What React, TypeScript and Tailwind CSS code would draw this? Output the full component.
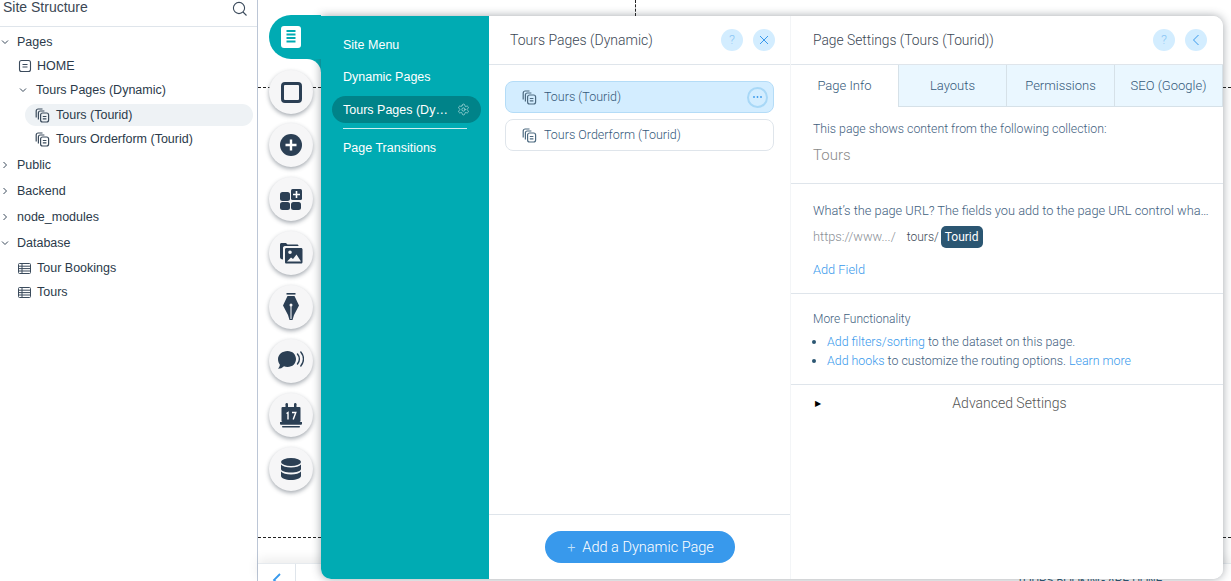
import type { ReactNode } from "react";
import { Settings } from "lucide-react";

const pageIconColor = "#2b3f54";

const PageIcon = () => (
  <svg width="14" height="14" viewBox="0 0 14 14" fill="none" stroke="#3b4b5c" strokeWidth="1.1">
    <rect x="1.500" y="1.500" width="11" height="11" rx="2" />
    <path d="M4.500 5.500h5M4.500 8h5" />
  </svg>
);

const StackIcon = ({ color = "#3b4b5c" }: { color?: string }) => (
  <svg width="15" height="15" viewBox="0 0 15 15" fill="none" stroke={color} strokeWidth="1.200">
    <path d="M1.200 9.500V3C1.200 1.800 2 1 3.200 1h4.300" />
    <path d="M3.400 11.500V5c0-1.200.8-2 2-2h4" />
    <rect x="5.600" y="5" width="8" height="9" rx="2" />
    <path d="M7.800 8.500h3.600M7.800 10.800h3.600" />
  </svg>
);

const TableIcon = () => (
  <svg width="13" height="13" viewBox="0 0 13 13" fill="none" stroke="#3b4b5c" strokeWidth="1">
    <rect x="0.500" y="1.500" width="12" height="10" rx="1" />
    <path d="M0.500 4.200h12M0.500 6.600h12M0.500 9h12M4 1.500v10" />
  </svg>
);

const Chevron = ({ open }: { open: boolean }) => (
  <svg width="8" height="8" viewBox="0 0 8 8" fill="none" stroke="#3b4b5c" strokeWidth="1" className="shrink-0">
    {open ? <path d="M1 2.500 4 5.500 7 2.500" /> : <path d="M2.500 1 5.500 4 2.500 7" />}
  </svg>
);

const FolderRow = ({ label, open, className = "" }: { label: string; open: boolean; className?: string }) => (
  <div className={`flex h-6 items-center pl-[1px] ${className}`}>
    <Chevron open={open} />
    <span className="ml-[8px]">{label}</span>
  </div>
);

const Sidebar = () => (
  <div className="w-[258px] h-full shrink-0 border-r border-[#bcc6d6] bg-white text-[12.5px] text-[#2b3a4a] font-['Liberation_Sans',sans-serif]">
    <div className="flex h-[27px] items-start justify-between border-b border-[#dfe5eb] pl-[3px] pr-[9px]">
      <span className="text-[14px] leading-[15px] text-[#3b4754]">Site Structure</span>
      <svg width="16" height="16" viewBox="0 0 16 16" fill="none" stroke="#3b4b5c" strokeWidth="1.100" className="mt-[1px]">
        <circle cx="7" cy="7" r="5.600" />
        <path d="M11 11l3.500 3.500" />
      </svg>
    </div>
    <FolderRow label="Pages" open className="mt-[3px]" />
    <div className="flex h-6 items-center pl-[18px] gap-[4px]">
      <PageIcon />
      <span className="ml-[1px]">HOME</span>
    </div>
    <div className="flex h-6 items-center pl-[19px]">
      <Chevron open />
      <span className="ml-[9px]">Tours Pages (Dynamic)</span>
    </div>
    <div className="ml-[25px] mr-[4px] mt-[2px] flex h-[22px] items-center gap-[6px] rounded-full bg-[#eef2f5] pl-[10px]">
      <StackIcon />
      <span>Tours (Tourid)</span>
    </div>
    <div className="ml-[25px] mr-[4px] mt-[1px] flex h-6 items-center gap-[6px] pl-[10px]">
      <StackIcon />
      <span>Tours Orderform (Tourid)</span>
    </div>
    <FolderRow label="Public" open={false} className="mt-[2px]" />
    <FolderRow label="Backend" open={false} className="mt-[2px]" />
    <FolderRow label="node_modules" open={false} className="mt-[2px]" />
    <FolderRow label="Database" open className="mt-[2px]" />
    <div className="mt-[1px] flex h-6 items-center gap-[6px] pl-[18px]">
      <TableIcon />
      <span>Tour Bookings</span>
    </div>
    <div className="flex h-6 items-center gap-[6px] pl-[18px]">
      <TableIcon />
      <span>Tours</span>
    </div>
  </div>
);

const RailButton = ({ children, className = "" }: { children: ReactNode; className?: string }) => (
  <div className={`flex h-11 w-11 items-center justify-center rounded-full bg-[#f6f6f7] shadow-[0_2px_4px_rgba(60,70,85,0.45)] ${className}`}>
    {children}
  </div>
);

const Rail = () => (
  <div className="relative -mt-px w-[52px] shrink-0">
    <div className="absolute right-0 top-[43px] h-[14px] w-[14px] bg-[#00abb3]" />
    <div className="absolute right-0 top-[44px] h-[14px] w-[14px] rounded-tr-[14px] bg-white" />
    <div className="relative z-20 flex h-11 items-center justify-center rounded-l-[22px] bg-[#00abb3] pr-[9px]">
      <svg width="20" height="22" viewBox="0 0 20 22">
        <rect x="0" y="0" width="20" height="22" rx="3" fill="#fff" />
        <path d="M5.500 5h9M5.500 8.500h9M5.500 12h9M5.500 15.500h9" stroke="#00abb3" strokeWidth="2" />
      </svg>
    </div>
    <div className="relative flex flex-col gap-[10px] pt-[11px]">
      <RailButton className="-mb-px">
        <div className="h-[21px] w-[21px] rounded-[4px] border-[3px] border-[#2b3f54]" />
      </RailButton>
      <RailButton>
        <svg width="22" height="22" viewBox="0 0 22 22">
          <circle cx="11" cy="11" r="11" fill={pageIconColor} />
          <path d="M11 5.500v11M5.500 11h11" stroke="#fff" strokeWidth="2.400" />
        </svg>
      </RailButton>
      <RailButton>
        <svg width="22" height="22" viewBox="0 0 22 22" fill={pageIconColor}>
          <rect x="0" y="4" width="10" height="9" rx="2.500" />
          <rect x="0" y="14" width="10" height="8" rx="2.500" />
          <rect x="11" y="14" width="10" height="8" rx="2.500" />
          <rect x="11" y="1" width="11" height="11" rx="1.500" />
          <path d="M16.500 3v7M13 6.500h7" stroke="#fff" strokeWidth="1.600" />
        </svg>
      </RailButton>
      <RailButton>
        <svg width="23" height="22" viewBox="0 0 23 22" fill={pageIconColor}>
          <path d="M0 2.500C0 1.500.7 1 1.500 1H6l1.500 1.500H17c1 0 1.500.5 1.500 1.500H5C3.500 4 3 5 3 6v11.500C1 17.500 0 16.500 0 15z" />
          <path fillRule="evenodd" d="M6.500 6H21c1 0 1.500.6 1.500 1.500V20c0 1-.6 1.500-1.500 1.500H6.500C5.500 21.500 5 21 5 20V7.500C5 6.600 5.500 6 6.500 6zM10 8.500a1.800 1.800 0 100 3.600 1.800 1.800 0 000-3.600zM7 19.500h14l-4.500-7-3.500 4.500-2-1.500z" />
        </svg>
      </RailButton>
      <RailButton>
        <svg width="16" height="28" viewBox="0 0 16 28" fill={pageIconColor}>
          <rect x="3.500" y="0" width="9" height="1.600" />
          <path fillRule="evenodd" d="M4.500 3h7L16 12.500 11 22l-1.500 5h-3L5 22 0 12.500zM8 10.500a1.500 1.500 0 100 3 1.500 1.500 0 000-3z" />
          <path d="M7.400 13h1.200v13h-1.200z" fill="#dfe3e8" />
        </svg>
      </RailButton>
      <RailButton>
        <svg width="26" height="20" viewBox="0 0 26 20" fill="none">
          <path d="M9.500 0C14.600 0 18 3.600 18 8s-3.400 8-8.500 8c-1.300 0-2.500-.2-3.500-.7C4.300 17 2.300 17.800 0 17.800c1.100-1.200 1.800-2.500 1.900-4C.8 12.300 0 10.300 0 8 0 3.600 4.400 0 9.500 0z" fill={pageIconColor} />
          <path d="M19.500 3c1.300 1.500 1.900 3.200 1.900 5s-.6 3.500-1.900 5M22.800 1c1.800 2.100 2.700 4.500 2.700 7s-.9 4.900-2.700 7" stroke={pageIconColor} strokeWidth="1.400" strokeLinecap="round" />
        </svg>
      </RailButton>
      <RailButton>
        <svg width="22" height="25" viewBox="0 0 22 25" fill={pageIconColor}>
          <rect x="1.500" y="4" width="19" height="15" rx="1" />
          <rect x="5.500" y="0" width="2.500" height="5" rx="1.200" />
          <rect x="14" y="0" width="2.500" height="5" rx="1.200" />
          <path d="M0 19h22v1.500c0 .8-.5 1.300-1.300 1.300H1.300C.5 21.800 0 21.300 0 20.500z" />
          <rect x="2" y="23" width="18" height="1.500" rx="0.700" />
          <path d="M6.500 10.500l1.500-1v7M12 9.500h3.800l-2.600 7" stroke="#fff" strokeWidth="1.400" fill="none" />
        </svg>
      </RailButton>
      <RailButton>
        <svg width="20" height="22" viewBox="0 0 20 22" fill={pageIconColor}>
          <ellipse cx="10" cy="4" rx="10" ry="4" />
          <path d="M0 6.500C1.500 8.500 5.500 9.500 10 9.500s8.500-1 10-3V11c0 2-4.500 3.500-10 3.500S0 13 0 11z" />
          <path d="M0 13.500c1.500 2 5.500 3 10 3s8.500-1 10-3V18c0 2.200-4.500 4-10 4S0 20.200 0 18z" />
        </svg>
      </RailButton>
    </div>
  </div>
);

const MenuPanel = () => (
  <div className="w-[168px] shrink-0 rounded-bl-[8px] bg-[#00abb3] pt-[13px] text-[12.5px] text-white font-['Liberation_Sans',sans-serif]">
    <div className="flex h-8 items-center pl-[22px]">Site Menu</div>
    <div className="flex h-8 items-center pl-[22px]">Dynamic Pages</div>
    <div className="ml-[11px] mr-[8px] mt-[3px] flex h-[27px] items-center justify-between rounded-full bg-[#008389] pl-[11px] pr-[11px]">
      <span className="mt-px">Tours Pages (Dy…</span>
      <Settings size={13} strokeWidth={1.25} color="#bfe6e8" />
    </div>
    <div className="ml-[22px] mr-[22px] mt-[5px] h-px bg-[#cdeef0]" />
    <div className="mt-[3px] flex h-[33px] items-center pl-[22px]">Page Transitions</div>
  </div>
);

const CircleButton = ({ children }: { children: ReactNode }) => (
  <div className="flex h-[22px] w-[22px] items-center justify-center rounded-full bg-[#d3edff] text-[13px] text-[#8cc8f5]">
    {children}
  </div>
);

const PageListItem = ({ label, active }: { label: string; active?: boolean }) => (
  <div
    className={`flex h-8 items-center justify-between rounded-[8px] border pl-4 pr-[5px] ${
      active ? "border-[#b4dcf7] bg-[#d3edff]" : "border-[#dfe5eb] bg-white"
    }`}
  >
    <div className="flex items-center gap-[7px]">
      <StackIcon color="#4d6a80" />
      <span className="text-[#35597a]">{label}</span>
    </div>
    {active && (
      <div className="flex h-[21px] w-[21px] items-center justify-center rounded-full border-2 border-[#a8d8f7]">
        <svg width="9" height="2" viewBox="0 0 9 2" fill="#3899ec">
          <circle cx="1" cy="1" r="0.900" />
          <circle cx="4.500" cy="1" r="0.900" />
          <circle cx="8" cy="1" r="0.900" />
        </svg>
      </div>
    )}
  </div>
);

const DynamicPagesColumn = () => (
  <div className="flex w-[302px] shrink-0 flex-col border-r border-[#f3f5f7] bg-white">
    <div className="flex h-[49px] items-center justify-between border-b border-[#dfe5eb] pl-[21px] pr-[15px] text-[14px] text-[#3b4754]">
      <span>Tours Pages (Dynamic)</span>
      <div className="flex gap-[10px]">
        <CircleButton>?</CircleButton>
        <CircleButton>
          <svg width="10" height="10" viewBox="0 0 10 10" stroke="#3899ec" strokeWidth="1">
            <path d="M1 1l8 8M9 1l-8 8" />
          </svg>
        </CircleButton>
      </div>
    </div>
    <div className="flex flex-1 flex-col gap-[6px] pl-4 pr-4 pt-[16px] text-[12.5px]">
      <PageListItem label="Tours (Tourid)" active />
      <PageListItem label="Tours Orderform (Tourid)" />
    </div>
    <div className="flex h-[65px] items-center justify-center border-t border-[#dfe5eb]">
      <div className="flex h-8 w-[190px] items-center justify-center gap-[7px] rounded-full bg-[#3899ec] pl-[2px] pt-px text-[14.5px] text-white">
        <span className="text-[#bfe0fa]">+</span>
        <span>Add a Dynamic Page</span>
      </div>
    </div>
  </div>
);

const Tab = ({ label, active }: { label: string; active?: boolean }) => (
  <div
    className={`flex h-[42px] w-[108px] items-center justify-center border-r border-[#d6e1e8] ${
      active ? "bg-white" : "border-b bg-[#eaf7ff]"
    }`}
  >
    {label}
  </div>
);

const SettingsColumn = () => (
  <div className="min-w-0 flex-1 bg-white">
    <div className="flex h-[49px] items-center justify-between border-b border-[#dfe5eb] pl-[22px] pr-4 text-[13.8px] text-[#3b4754]">
      <span>Page Settings (Tours (Tourid))</span>
      <div className="flex gap-[10px]">
        <CircleButton>?</CircleButton>
        <CircleButton>
          <svg width="8" height="12" viewBox="0 0 8 12" fill="none" stroke="#3899ec" strokeWidth="1">
            <path d="M6.500 1 1.500 6l5 5" />
          </svg>
        </CircleButton>
      </div>
    </div>
    <div className="flex text-[13px] text-[#35597a]">
      <Tab label="Page Info" active />
      <Tab label="Layouts" />
      <Tab label="Permissions" />
      <Tab label="SEO (Google)" />
    </div>
    <div className="h-[77px] border-b border-[#dfe5eb] px-[22px] pt-[14px] text-[12.3px] text-[#3f6180]">
      <p className="leading-[16px]">This page shows content from the following collection:</p>
      <p className="mt-[9px] text-[15px] leading-[18px] text-[#8a8a8a]">Tours</p>
    </div>
    <div className="h-[110px] border-b border-[#dfe5eb] px-[22px] pt-[19px] text-[12.8px]">
      <p className="whitespace-nowrap leading-[16px] text-[#3f6180]">
        What’s the page URL? The fields you add to the page URL control wha…
      </p>
      <div className="mt-[7px] flex h-[22px] items-center">
        <span className="text-[#8a8f96]">https://www.../</span>
        <span className="ml-[11px] text-[12px] text-[#3b4754]">tours/</span>
        <span className="ml-[2px] flex h-[22px] items-center rounded-[5px] bg-[#2b5672] px-[4px] text-[12px] font-normal text-white">Tourid</span>
      </div>
      <p className="mt-[14px] leading-[16px] text-[#3899ec]">Add Field</p>
    </div>
    <div className="h-[91px] border-b border-[#dfe5eb] px-[22px] pt-[17px] text-[12.4px] text-[#3f6180]">
      <p className="text-[12px] leading-[16px]">More Functionality</p>
      <ul className="mt-[5px] list-disc pl-[14px] marker:text-[#2b5672]">
        <li className="leading-[19px]">
          <span className="text-[#3899ec]">Add filters/sorting</span> to the dataset on this page.
        </li>
        <li className="leading-[19px]">
          <span className="text-[#3899ec]">Add hooks</span> to customize the routing options.{" "}
          <span className="text-[#3899ec]">Learn more</span>
        </li>
      </ul>
    </div>
    <div className="relative flex h-[37px] items-center justify-center pl-[5px] text-[14px] text-[#555]">
      <span className="absolute left-[24px] text-[8px] text-black">▶</span>
      Advanced Settings
    </div>
  </div>
);

const Canvas = () => (
  <div className="relative min-w-0 flex-1 bg-white">
    <div className="absolute left-0 right-0 top-[87px] border-t border-dashed border-[#222]" />
    <div className="absolute left-0 right-0 top-[537px] border-t border-dashed border-[#222]" />
    <div className="absolute left-[377px] top-0 h-[16px] border-l border-dashed border-[#222]" />
    <div className="absolute bottom-0 left-0 right-0 flex h-[18px] border-t border-[#e6eaee] bg-white shadow-[0_-4px_12px_rgba(0,0,0,0.08)]">
      <div className="flex w-[38px] justify-center border-r border-[#dfe5eb] pt-[9px]">
        <svg width="10" height="14" viewBox="0 0 10 14" fill="none" stroke="#3899ec" strokeWidth="1.800">
          <path d="M8 1 2 7l6 6" />
        </svg>
      </div>
    </div>
    <div className="absolute left-[759px] top-[573px] whitespace-nowrap text-[10.5px] font-['Liberation_Sans',sans-serif] text-[#2b5672]">
      TOURS BOOKING ARE DONE
    </div>
    <div className="absolute left-[11px] top-[16px] flex h-[563px] w-[954px] font-['Roboto',sans-serif] font-light">
      <Rail />
      <div className="relative z-10 flex min-w-0 flex-1 overflow-hidden rounded-b-[10px] rounded-tr-[10px] bg-white shadow-[0_0_10px_rgba(50,60,70,0.45)]">
        <MenuPanel />
        <DynamicPagesColumn />
        <SettingsColumn />
      </div>
    </div>
  </div>
);

export default function App() {
  return (
    <div className="flex h-[581px] w-[1231px] overflow-hidden bg-white">
      <Sidebar />
      <Canvas />
    </div>
  );
}
